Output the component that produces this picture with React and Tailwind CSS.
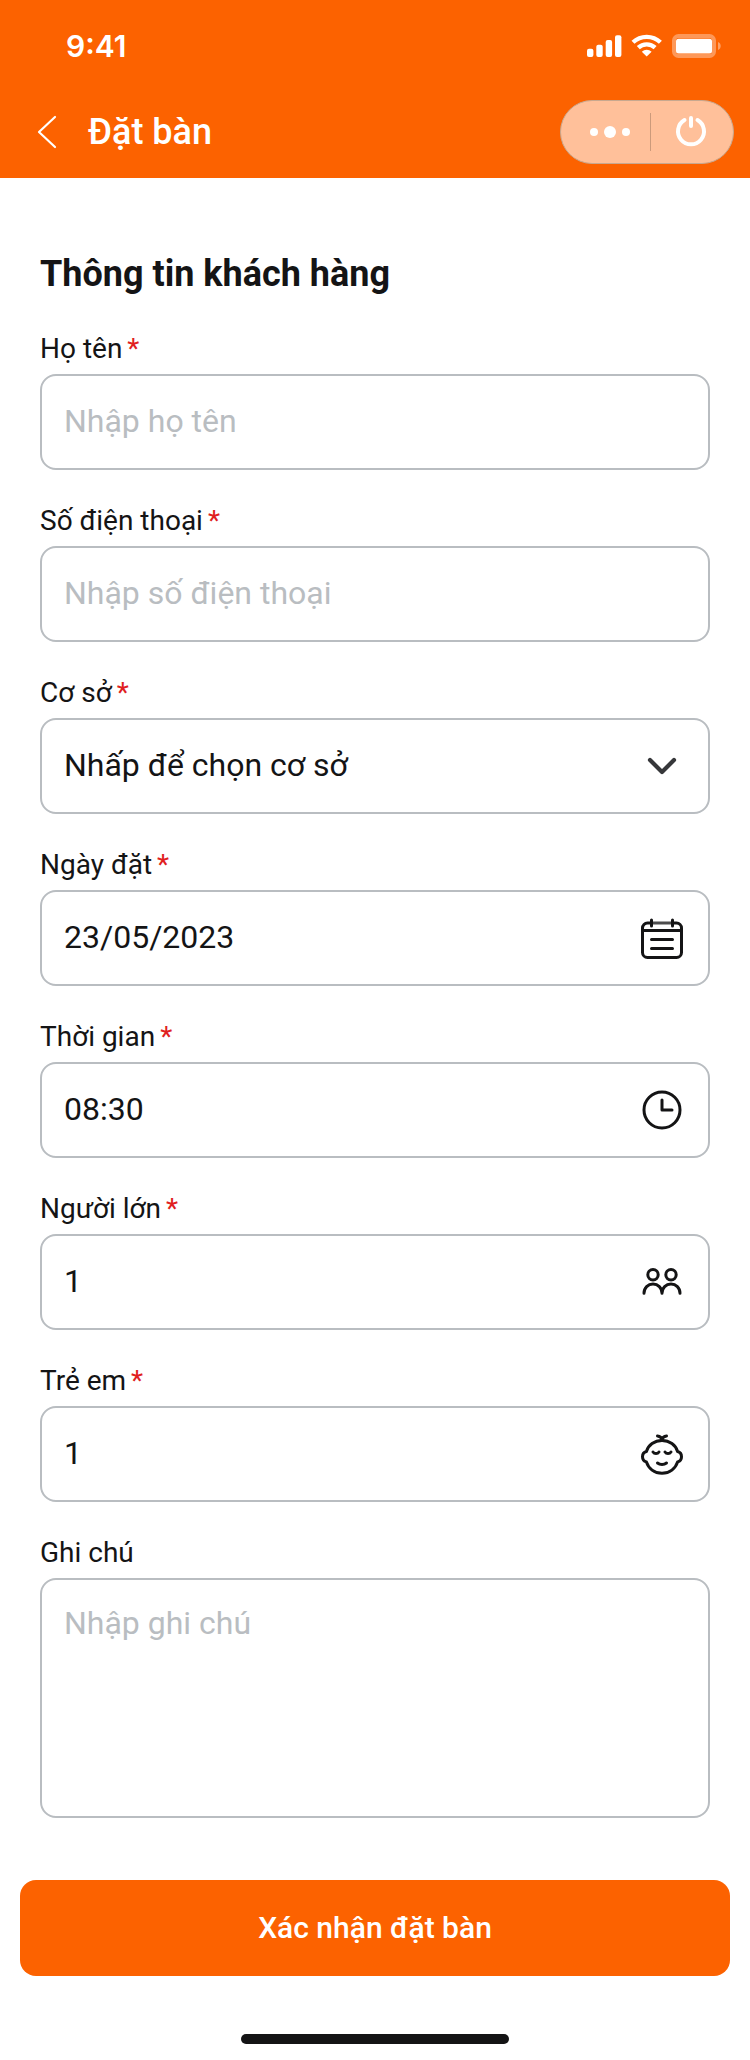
import React from "react";

const boxClass =
  "w-full rounded-2xl border-2 border-[#b9bdc1] bg-white px-[22px] text-[32px] text-[#141415] placeholder:text-[#b9bdc1] placeholder:opacity-100 outline-none focus:border-[#fc6200]";

function FieldIcon({ children }) {
  return (
    <svg
      viewBox="0 0 48 48"
      aria-hidden="true"
      className="pointer-events-none absolute inset-y-0 right-6 my-auto size-12"
      fill="none"
      stroke="#141415"
      strokeWidth="3"
      strokeLinecap="round"
      strokeLinejoin="round"
    >
      {children}
    </svg>
  );
}

const ChevronIcon = () => (
  <FieldIcon>
    <path d="M12 18l12 12 12-12" stroke="#36373a" strokeWidth="4.2" />
  </FieldIcon>
);

const CalendarIcon = () => (
  <FieldIcon>
    <path d="M14 9h20" stroke="#4c4c4d" />
    <path d="M13.5 9H9.5a5 5 0 0 0-5 5v24.5a5 5 0 0 0 5 5h29a5 5 0 0 0 5-5V14a5 5 0 0 0-5-5h-4" />
    <path d="M4.5 16.5h39M13.5 6v6M34.5 6v6M13.5 25.5h21M13.5 34.5h21" />
  </FieldIcon>
);

const ClockIcon = () => (
  <FieldIcon>
    <circle cx="24" cy="24" r="18" />
    <path d="M24 14v10h10" />
  </FieldIcon>
);

const PeopleIcon = () => (
  <FieldIcon>
    <circle cx="15" cy="16.7" r="5.2" />
    <circle cx="33" cy="16.7" r="5.2" />
    <path d="M6 35.300c0-5.400 4-9.200 9-9.200s9 3.800 9 9.200c0-5.400 4-9.200 9-9.200s9 3.800 9 9.200" />
  </FieldIcon>
);

const BabyIcon = () => (
  <FieldIcon>
    <path d="M24 10.500c-7.500 0-13.700 4.500-15.600 11-2.300.6-3.900 2.700-3.900 5.200s1.600 4.600 3.900 5.200c2 6.600 8 11.400 15.600 11.400s13.600-4.800 15.600-11.400c2.300-.6 3.900-2.700 3.900-5.200s-1.600-4.600-3.900-5.200c-1.900-6.500-8.100-11-15.600-11z" />
    <path d="M19.500 6c2.500.3 4 1.700 4.500 4 .5-2.300 2-3.700 4.500-4" />
    <path d="M15 22c1.400 2.100 4.600 2.100 6 0M27 22c1.400 2.100 4.600 2.100 6 0M19.500 33c2.500 2 6.500 2 9 0" />
  </FieldIcon>
);

function Field({ id, label, required = true, children }) {
  return (
    <div className="flex flex-col gap-1.5">
      <label htmlFor={id} className="flex gap-[5px] text-[28px] leading-[38px]">
        {label}
        {required && <span className="text-[#e02020]">*</span>}
      </label>
      <div className="relative flex">{children}</div>
    </div>
  );
}

function InputField({ id, label, icon, ...input }) {
  return (
    <Field id={id} label={label}>
      <input id={id} type="text" className={`${boxClass} h-24 pb-0.5`} {...input} />
      {icon}
    </Field>
  );
}

function StatusIcons() {
  return (
    <svg viewBox="0 0 134 24" width="134" height="24" aria-hidden="true" fill="white">
      <rect x="0" y="14.700" width="6.400" height="8.300" rx="2" />
      <rect x="9.300" y="10.700" width="6.400" height="12.300" rx="2" />
      <rect x="18.700" y="6" width="6.400" height="17" rx="2" />
      <rect x="28" y="1.300" width="6.400" height="21.700" rx="2" />
      <g fill="none" stroke="white" strokeWidth="4.300">
        <path d="M46 8.300a19.800 19.800 0 0 1 27.400 0" />
        <path d="M51.300 13.600a12.300 12.300 0 0 1 16.800 0" />
      </g>
      <path d="M59.700 22.600l-4.900-4.900a7.300 7.300 0 0 1 9.800 0z" />
      <rect x="87" y="2" width="40" height="20" rx="4.500" fill="none" stroke="white" strokeOpacity=".35" strokeWidth="4" />
      <rect x="89" y="4.700" width="36" height="14.800" rx="2.500" />
      <path d="M131 8c1.800.7 2.700 2.200 2.700 4s-.9 3.300-2.700 4z" opacity=".4" />
    </svg>
  );
}

function Header() {
  return (
    <header className="bg-[#fc6200] pb-3.5 text-white">
      <div className="mb-2 flex h-[92px] items-center justify-between pr-[29px] pl-[66px]">
        <time className="font-[Inter,sans-serif] text-[30px] leading-9 font-semibold">9:41</time>
        <StatusIcons />
      </div>
      <div className="flex h-16 items-center pr-4 pl-6">
        <button type="button" aria-label="Quay lại" className="mr-4">
          <svg viewBox="0 0 48 48" className="size-12" fill="none" stroke="white" strokeWidth="2.200" strokeLinecap="round" strokeLinejoin="round">
            <path d="M31 9L15 24l16 15" />
          </svg>
        </button>
        <h1 className="flex-1 text-[36px] leading-[44px] font-medium">Đặt bàn</h1>
        <div className="flex h-16 w-[174px] items-center rounded-full border border-[#c8a88f] bg-[#ffc09a]">
          <button type="button" aria-label="Thêm" className="flex flex-1 justify-end pr-5">
            <svg viewBox="0 0 40 12" width="40" height="12" fill="white">
              <circle cx="4" cy="6" r="4" />
              <circle cx="20" cy="6" r="6" />
              <circle cx="36" cy="6" r="4" />
            </svg>
          </button>
          <span className="h-[38px] w-px bg-[#cc9a7b]" />
          <button type="button" aria-label="Đóng" className="flex w-[82px] pl-6">
            <svg viewBox="0 0 32 32" className="size-8" fill="none" stroke="white" strokeWidth="4" strokeLinecap="round">
              <path d="M9.500 4.100a13 13 0 1 0 13 0M16 2v8" />
            </svg>
          </button>
        </div>
      </div>
    </header>
  );
}

export default function App() {
  return (
    <div className="bg-white font-[Roboto,sans-serif] text-[#141415]">
      <Header />
      <form onSubmit={(e) => e.preventDefault()}>
        <div className="flex flex-col gap-8 px-10 pt-[72px]">
          <h2 className="text-[36px] leading-[48px] font-bold">Thông tin khách hàng</h2>
          <InputField id="name" label="Họ tên" placeholder="Nhập họ tên" />
          <InputField id="phone" label="Số điện thoại" placeholder="Nhập số điện thoại" inputMode="tel" />
          <Field id="branch" label="Cơ sở">
            <select id="branch" className={`${boxClass} h-24 appearance-none pb-0.5`}>
              <option>Nhấp để chọn cơ sở</option>
            </select>
            <ChevronIcon />
          </Field>
          <InputField id="date" label="Ngày đặt" defaultValue="23/05/2023" icon={<CalendarIcon />} />
          <InputField id="time" label="Thời gian" defaultValue="08:30" icon={<ClockIcon />} />
          <InputField id="adults" label="Người lớn" defaultValue="1" inputMode="numeric" icon={<PeopleIcon />} />
          <InputField id="children" label="Trẻ em" defaultValue="1" inputMode="numeric" icon={<BabyIcon />} />
          <Field id="note" label="Ghi chú" required={false}>
            <textarea
              id="note"
              placeholder="Nhập ghi chú"
              className={`${boxClass} h-60 resize-none py-[22px] leading-[42px]`}
            />
          </Field>
        </div>
        <div className="px-5 pt-[62px]">
          <button type="submit" className="h-24 w-full rounded-2xl bg-[#fc6200] pb-0.5 text-[30px] font-medium text-white">
            Xác nhận đặt bàn
          </button>
        </div>
      </form>
      <div className="flex justify-center pt-[58px] pb-4">
        <div className="h-2.5 w-[268px] rounded-full bg-[#141415]" />
      </div>
    </div>
  );
}
